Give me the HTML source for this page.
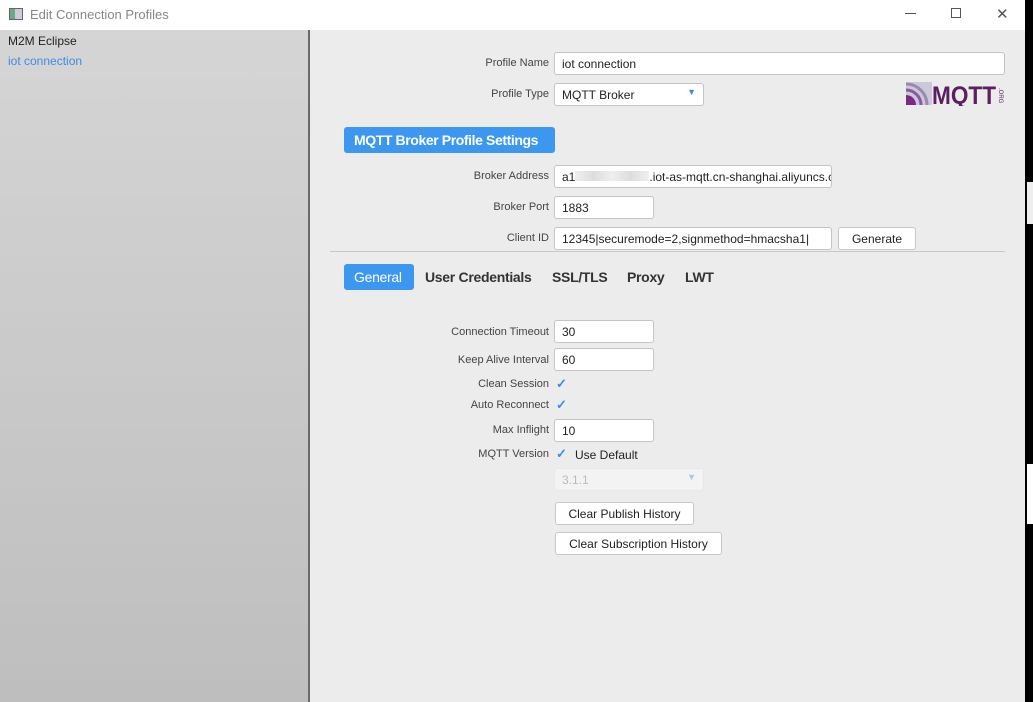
<!DOCTYPE html>
<html><head><meta charset="utf-8"><style>
*{margin:0;padding:0;box-sizing:border-box}
body{width:1033px;height:702px;overflow:hidden;background:#000;font-family:"Liberation Sans",sans-serif;font-size:12px;color:#333;position:relative}
.win{position:absolute;left:0;top:0;width:1025px;height:702px;background:#ececec}
.title{position:absolute;left:0;top:0;width:1025px;height:30px;background:#fff}
.title .t{position:absolute;left:30px;top:7px;font-size:13px;color:#888}
.ico{position:absolute;left:9px;top:8px;width:14px;height:12px;border:1px solid #666;background:linear-gradient(90deg,#6a8 0 40%,#ccd 40%)}
.left{position:absolute;left:0;top:30px;width:310px;height:672px;background:linear-gradient(#d5d5d5,#bebebe);border-right:2px solid #6a6a6a}
.a{position:absolute;font-size:12px}
.lbl{position:absolute;right:476px;font-size:11px;color:#444;text-align:right;white-space:nowrap}
.in{position:absolute;height:23px;background:#fff;border:1px solid #c4c4c4;border-radius:3px;padding:4px 7px;font-size:12px;color:#222;white-space:nowrap;overflow:hidden}
.btn{position:absolute;height:23px;background:#fff;border:1px solid #c8c8c8;border-radius:3px;font-size:12px;color:#222;text-align:center;padding-top:4px}
.chk{position:absolute;width:14px;height:14px;color:#3b8de6;font-size:13px;font-weight:bold;line-height:14px}
.tab{position:absolute;top:269px;font-size:14px;letter-spacing:-0.3px;font-weight:bold;color:#333}
</style></head><body>
<div class="win">
<div class="title"><div class="ico"></div><div class="t">Edit Connection Profiles</div>
<div class="a" style="left:905px;top:13px;width:11px;border-top:1px solid #555"></div>
<div class="a" style="left:951px;top:8px;width:10px;height:10px;border:1px solid #555"></div>
<div class="a" style="left:996px;top:5px;font-size:15px;color:#555">✕</div>
</div>
<div class="left">
<div class="a" style="left:8px;top:4px;color:#222">M2M Eclipse</div>
<div class="a" style="left:8px;top:24px;color:#3b8de6">iot connection</div>
</div>

<div class="lbl" style="top:57px">Profile Name</div>
<div class="in" style="left:554px;top:52px;width:451px">iot connection</div>
<div class="lbl" style="top:88px">Profile Type</div>
<div class="in" style="left:554px;top:83px;width:150px">MQTT Broker<span style="position:absolute;right:7px;top:3px;color:#3b8de6;font-size:9px">▼</span></div>
<svg class="a" style="left:906px;top:82px" width="100" height="24">
<rect x="0" y="0" width="26" height="23" fill="#ccc8dc"/>
<path d="M0 23 L0 13 A10 10 0 0 1 10 23 Z" fill="#7a2a80"/>
<path d="M0 8 A15 15 0 0 1 15 23" stroke="#8a5a9a" stroke-width="3" fill="none"/>
<path d="M0 2 A21 21 0 0 1 21 23" stroke="#9a8ab0" stroke-width="3" fill="none"/>
<text x="26" y="22" font-family="Liberation Sans" font-weight="bold" font-size="25" fill="#5a2060" textLength="64" lengthAdjust="spacingAndGlyphs">MQTT</text>
<text x="0" y="0" transform="translate(93,6) rotate(90)" font-size="6" fill="#5a2060" font-family="Liberation Sans">.ORG</text>
</svg>

<div class="a" style="left:344px;top:127px;width:211px;height:26px;background:#3b97f0;border-radius:3px;color:#fff;font-size:14px;letter-spacing:-0.4px;font-weight:bold;padding:5px 10px;white-space:nowrap">MQTT Broker Profile Settings</div>

<div class="lbl" style="top:170px">Broker Address</div>
<div class="in" style="left:554px;top:165px;width:278px">a1<span style="display:inline-block;width:74px;height:10px;background:linear-gradient(90deg,#eee,#ddd,#eee,#ddd,#eee)"></span>.iot-as-mqtt.cn-shanghai.aliyuncs.c</div>
<div class="lbl" style="top:201px">Broker Port</div>
<div class="in" style="left:554px;top:196px;width:100px">1883</div>
<div class="lbl" style="top:232px">Client ID</div>
<div class="in" style="left:554px;top:227px;width:278px">12345|securemode=2,signmethod=hmacsha1|</div>
<div class="btn" style="left:838px;top:227px;width:78px">Generate</div>
<div class="a" style="left:330px;top:251px;width:675px;border-top:1px solid #c8c8c8"></div>

<div class="a" style="left:344px;top:264px;width:70px;height:26px;background:#3b97f0;border-radius:3px"></div>
<div class="tab" style="left:354px;color:#fff;font-weight:normal">General</div>
<div class="tab" style="left:425px">User Credentials</div>
<div class="tab" style="left:552px">SSL/TLS</div>
<div class="tab" style="left:627px">Proxy</div>
<div class="tab" style="left:685px">LWT</div>

<div class="lbl" style="top:326px">Connection Timeout</div>
<div class="in" style="left:554px;top:320px;width:100px">30</div>
<div class="lbl" style="top:354px">Keep Alive Interval</div>
<div class="in" style="left:554px;top:348px;width:100px">60</div>
<div class="lbl" style="top:378px">Clean Session</div>
<div class="chk" style="left:556px;top:377px">✓</div>
<div class="lbl" style="top:399px">Auto Reconnect</div>
<div class="chk" style="left:556px;top:398px">✓</div>
<div class="lbl" style="top:424px">Max Inflight</div>
<div class="in" style="left:554px;top:419px;width:100px">10</div>
<div class="lbl" style="top:448px">MQTT Version</div>
<div class="chk" style="left:556px;top:447px">✓</div>
<div class="a" style="left:575px;top:448px;color:#222">Use Default</div>
<div class="in" style="left:554px;top:468px;width:150px;background:#f3f3f3;border-color:#e8e8e8;color:#bbb">3.1.1<span style="position:absolute;right:7px;top:3px;color:#a8c8ec;font-size:9px">▼</span></div>
<div class="btn" style="left:555px;top:502px;width:139px">Clear Publish History</div>
<div class="btn" style="left:555px;top:532px;width:167px">Clear Subscription History</div>
</div>
<div class="a" style="left:1027px;top:182px;width:6px;height:42px;background:#eee"></div>
<div class="a" style="left:1027px;top:464px;width:6px;height:60px;background:#fff"></div>
</body></html>
